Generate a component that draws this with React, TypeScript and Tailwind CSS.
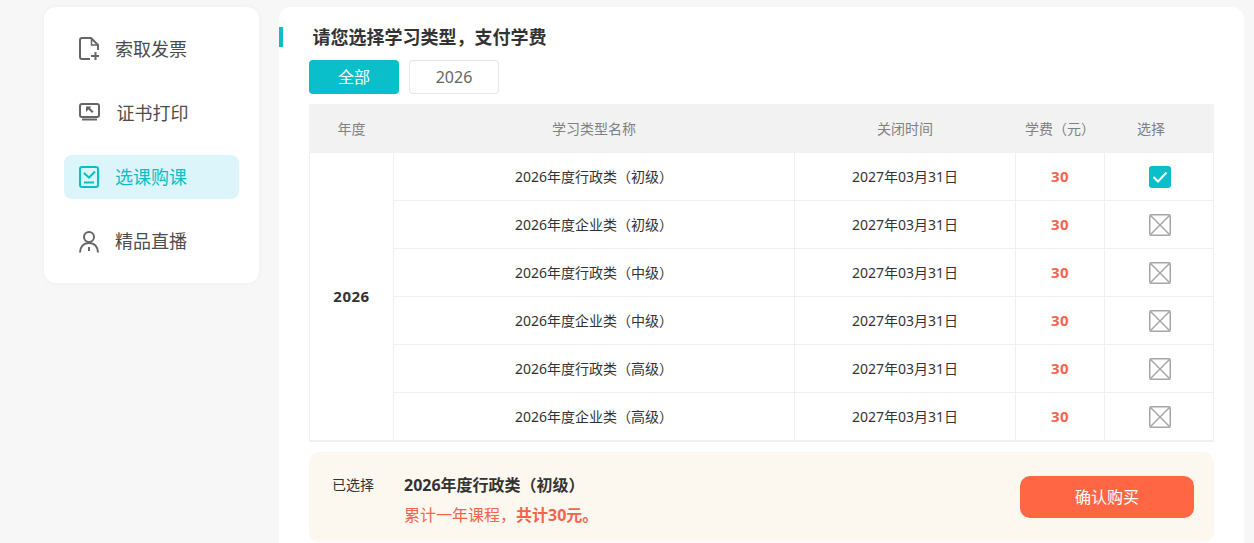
const rows = [
  "2026年度行政类（初级）",
  "2026年度企业类（初级）",
  "2026年度行政类（中级）",
  "2026年度企业类（中级）",
  "2026年度行政类（高级）",
  "2026年度企业类（高级）",
];

const InvoiceIcon = () => (
  <svg width="22" height="24" viewBox="0 0 22 24" fill="none" stroke="#666" strokeWidth="2">
    <path d="M12 22H4a2 2 0 0 1-2-2V3a2 2 0 0 1 2-2h9l7 7v5" strokeLinejoin="round" />
    <path d="M13.500 2v6h6" strokeWidth="1.500" />
    <path d="M13 19h8M17.500 15v8" />
  </svg>
);

const PrintIcon = () => (
  <svg width="22" height="20" viewBox="0 0 22 20" fill="none" stroke="#666" strokeWidth="2">
    <rect x="2" y="1" width="19" height="13" rx="2" />
    <path d="M4 16.500h15" />
    <path d="M8 3.500h5.500L12 5l3.500 3.500-1.500 1.500L10.500 6.500 8 9z" fill="#666" stroke="none" />
  </svg>
);

const CourseIcon = () => (
  <svg width="22" height="22" viewBox="0 0 22 22" fill="none" stroke="#0abfca" strokeWidth="2">
    <rect x="2" y="1" width="18" height="20" rx="2" />
    <path d="M6 7l5 4.500 6-6" />
    <path d="M6 16.500h10" />
  </svg>
);

const LiveIcon = () => (
  <svg width="22" height="24" viewBox="0 0 22 24" fill="none" stroke="#666" strokeWidth="2">
    <circle cx="11" cy="8" r="5" />
    <path d="M2 23.500c0-5.500 3.500-9.500 9-9.500s9 4 9 9.500" />
    <path d="M11 18v4" />
  </svg>
);

const nav = [
  { icon: <InvoiceIcon />, label: "索取发票" },
  { icon: <PrintIcon />, label: "证书打印", shift: true },
  { icon: <CourseIcon />, label: "选课购课", active: true },
  { icon: <LiveIcon />, label: "精品直播" },
];

const Unchecked = () => (
  <svg width="22" height="22" viewBox="0 0 22 22" fill="none" stroke="#a6a6a6" strokeWidth="1.500" className="mx-auto mt-[1px] block">
    <rect x="0.750" y="0.750" width="20.500" height="20.500" rx="1.500" />
    <path d="M1 1l20 20M21 1L1 21" />
  </svg>
);

const Checked = () => (
  <div className="mx-auto mt-[1px] flex h-[22px] w-[22px] items-center justify-center rounded-[3px] bg-[#0abfca]">
    <svg width="16" height="12" viewBox="0 0 16 12" fill="none" stroke="#fff" strokeWidth="2">
      <path d="M1.500 6l4.500 4.500 8.500-9" />
    </svg>
  </div>
);

export default function App() {
  return (
    <div
      className="flex h-[543px] w-[1254px] items-start gap-[20px] overflow-hidden bg-[#f7f7f7] pl-[44px] pt-[7px]"
      style={{ fontFamily: '"Noto Sans", "Noto Sans CJK SC", sans-serif' }}
    >
      {/* sidebar */}
      <aside className="flex w-[215px] flex-col gap-[20px] rounded-[12px] bg-white p-[20px] shadow-[0_0_6px_rgba(0,0,0,0.04)]">
        {nav.map((item) => (
          <div
            key={item.label}
            className={`flex h-[44px] items-center rounded-[8px] pl-[14px] ${item.active ? "bg-[#dcf5fa] text-[#0abfca]" : "text-[#4d4d4d]"}`}
          >
            <span className="flex w-[22px] justify-center">{item.icon}</span>
            <span className={`text-[18px] ${item.shift ? "ml-[16.5px]" : "ml-[15px]"}`}>{item.label}</span>
          </div>
        ))}
      </aside>

      {/* main panel */}
      <main className="h-[600px] w-[965px] rounded-t-[12px] bg-white pt-[20px]">
        <div className="flex h-[20px] items-center border-l-[4px] border-[#0abfca] pl-[29.5px] text-[18px] font-bold text-[#333]">
          请您选择学习类型，支付学费
        </div>
        <div className="ml-[30px] mt-[13px] flex gap-[10px]">
          <button className="h-[34px] w-[90px] rounded-[4px] bg-[#0abfca] text-[16px] text-white">全部</button>
          <button className="h-[34px] w-[90px] rounded-[4px] border border-[#e5e5e5] bg-white text-[16px] text-[#666]">2026</button>
        </div>

        <table className="ml-[30px] mt-[10px] w-[905px] table-fixed border-separate border-spacing-0 text-center text-[14px] text-[#333]">
          <colgroup>
            <col className="w-[85px]" />
            <col className="w-[401px]" />
            <col className="w-[221px]" />
            <col className="w-[89px]" />
            <col className="w-[109px]" />
          </colgroup>
          <thead>
            <tr className="h-[49px] bg-[#f2f2f2] text-[#808080]">
              <th className="font-normal">年度</th>
              <th className="pr-[1px] font-normal">学习类型名称</th>
              <th className="pr-[1px] font-normal">关闭时间</th>
              <th className="pr-[1px] font-normal">学费（元）</th>
              <th className="pr-[17px] font-normal">选择</th>
            </tr>
          </thead>
          <tbody>
            {rows.map((name, i) => {
              const cell = i === 5 ? "border-r border-b-2 border-[#f0f0f0]" : "border-r border-b border-[#f0f0f0]";
              return (
                <tr key={name} className={i === 5 ? "h-[49px]" : "h-[48px]"}>
                  {i === 0 && (
                    <td rowSpan={6} className="border-x border-b-2 border-[#f0f0f0] text-[15px] font-bold tracking-[0.5px]">
                      2026
                    </td>
                  )}
                  <td className={cell}>{name}</td>
                  <td className={cell}>2027年03月31日</td>
                  <td className={`${cell} text-[15px] font-bold tracking-[0.5px] text-[#f2644d]`}>30</td>
                  <td className={`${cell} pl-[2px]`}>{i === 0 ? <Checked /> : <Unchecked />}</td>
                </tr>
              );
            })}
          </tbody>
        </table>

        <div className="ml-[30px] mt-[10px] flex h-[90px] w-[905px] items-center rounded-[10px] bg-[#fdf8ef] pl-[23px] pr-[20px]">
          <div className="flex flex-1 items-start pt-[6px]">
            <div className="w-[72px] text-[14px] leading-[24px] text-[#333]">已选择</div>
            <div>
              <div className="text-[16px] font-bold leading-[24px] text-[#333]">2026年度行政类（初级）</div>
              <div className="mt-[6px] text-[16px] leading-[24px] text-[#f2644d]">
                累计一年课程，<span className="font-bold">共计30元。</span>
              </div>
            </div>
          </div>
          <button className="h-[42px] w-[174px] rounded-[10px] bg-[#ff6644] text-[16px] text-white">确认购买</button>
        </div>
      </main>
    </div>
  );
}
